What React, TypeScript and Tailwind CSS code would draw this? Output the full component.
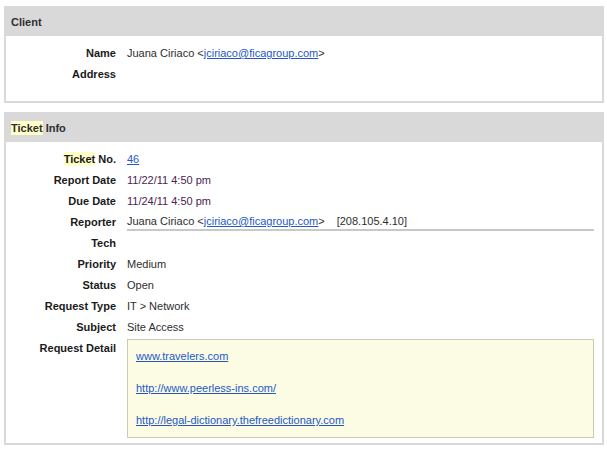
import React from "react";

const Hl = ({ children }: { children: React.ReactNode }) => (
  <span className="bg-[#ffffc8] py-[1px]">{children}</span>
);

const Label = ({ children }: { children: React.ReactNode }) => (
  <div className="text-right font-bold text-[#1a1a1a] leading-[21px] whitespace-nowrap">{children}</div>
);

const Val = ({ children, className = "" }: { children?: React.ReactNode; className?: string }) => (
  <div className={"text-[#2e2e2e] leading-[21px] h-[21px] whitespace-nowrap " + className}>{children}</div>
);

const A = ({ children }: { children: React.ReactNode }) => (
  <a href="#" className="text-[#2458c8] underline">{children}</a>
);

export default function App() {
  return (
    <div
      className="bg-white w-[607px] h-[452px] overflow-hidden pt-[6px] text-[11px]"
      style={{ fontFamily: '"Liberation Sans", Arial, sans-serif' }}
    >
      {/* Client */}
      <div className="ml-[4px] w-[600px] border-2 border-[#d9d9d9] bg-white">
        <div className="h-[28px] bg-[#d9d9d9] flex items-center pl-[5px] font-bold text-[#2e2e2e]">
          Client
        </div>
        <div className="grid grid-cols-[110px_1fr] gap-x-[11px] pr-[8px] pt-[7px] pb-[16px]">
          <Label>Name</Label>
          <Val>
            Juana Ciriaco &lt;<A>jciriaco@ficagroup.com</A>&gt;
          </Val>
          <Label>Address</Label>
          <Val />
        </div>
      </div>

      {/* Ticket Info */}
      <div className="ml-[4px] mt-[9px] w-[600px] border-2 border-[#d9d9d9] bg-white">
        <div className="h-[28px] bg-[#d9d9d9] flex items-center pl-[5px] font-bold text-[#2e2e2e]">
          <span>
            <Hl>Ticket</Hl> Info
          </span>
        </div>
        <div className="grid grid-cols-[110px_1fr] gap-x-[11px] pr-[8px] pt-[7px] pb-[5px]">
          <Label>
            <Hl>Ticket</Hl> No.
          </Label>
          <Val>
            <A>46</A>
          </Val>
          <Label>Report Date</Label>
          <Val className="text-[#4b2450]">11/22/11 4:50 pm</Val>
          <Label>Due Date</Label>
          <Val className="text-[#4b2450]">11/24/11 4:50 pm</Val>
          <Label>Reporter</Label>
          <div className="h-[21px] pt-[2px]">
            <div className="leading-[15px] text-[#2e2e2e] border-b-2 border-[#c8c8c8] whitespace-nowrap">
              Juana Ciriaco &lt;<A>jciriaco@ficagroup.com</A>&gt;
              <span className="ml-[12px]">[208.105.4.10]</span>
            </div>
          </div>
          <Label>Tech</Label>
          <Val />
          <Label>Priority</Label>
          <Val>Medium</Val>
          <Label>Status</Label>
          <Val>Open</Val>
          <Label>Request Type</Label>
          <Val>IT &gt; Network</Val>
          <Label>Subject</Label>
          <Val>Site Access</Val>
          <Label>Request Detail</Label>
          <div className="mt-[1px] border border-[#cdcab0] bg-[#fcfce4] pl-[8px] pt-[10px] pb-[10px] flex flex-col gap-[19px]">
            <div className="leading-[13px]">
              <A>www.travelers.com</A>
            </div>
            <div className="leading-[13px]">
              <A>http://www.peerless-ins.com/</A>
            </div>
            <div className="leading-[13px]">
              <A>http://legal-dictionary.thefreedictionary.com</A>
            </div>
          </div>
        </div>
      </div>
    </div>
  );
}
